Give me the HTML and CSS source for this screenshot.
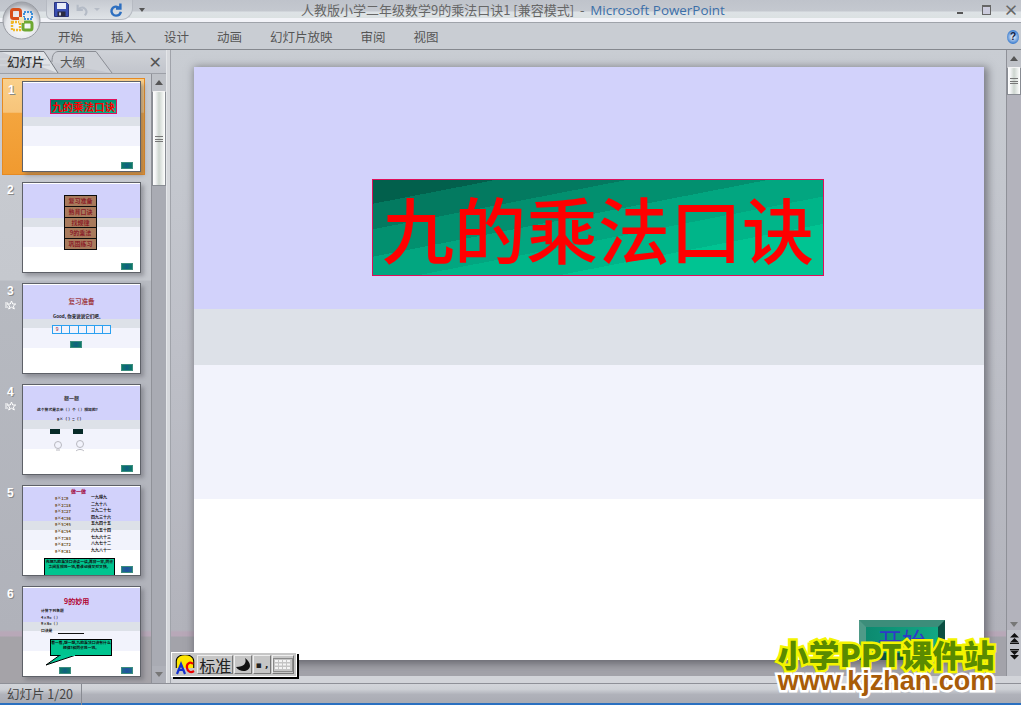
FILE: index.html
```html
<!DOCTYPE html>
<html lang="zh">
<head>
<meta charset="utf-8">
<title>PowerPoint</title>
<link rel="stylesheet" href="styles.css">
</head>
<body>
<div class="app">
  <header class="titlebar">
    <div class="qat">
      <svg class="qi" width="15" height="15" viewBox="0 0 15 15"><path d="M.5.5h12l2 2v12H.5z" fill="#3a4fb0" stroke="#2a3580"/><rect x="3" y="1" width="9" height="6" fill="#e8ecf8"/><rect x="3.500" y="9.500" width="8" height="5" fill="#2b2b40"/><rect x="5" y="10.500" width="2" height="3" fill="#c8c8d8"/></svg>
      <svg class="qi qi-undo" width="14" height="14" viewBox="0 0 16 16"><path d="M3 2v6h6M3.500 8C6 4 11 4 13 9c.5 2-.5 4-2 5" fill="none" stroke="#b4bbc6" stroke-width="2.400"/></svg>
      <span class="qcaret"></span>
      <svg class="qi qi-redo" width="14" height="15" viewBox="0 0 16 16"><path d="M13 1v6H8M12.500 7C10 3.500 4.500 4 3 8.500 2 12 5 15 8 15s5-2 5.500-4.500" fill="none" stroke="#2d6fc0" stroke-width="2.800"/></svg>
    </div>
    <span class="qmore"></span>
    <h1 class="wintitle">人教版小学二年级数学9的乘法口诀1 [兼容模式] &nbsp;-&nbsp; <span class="appname">Microsoft PowerPoint</span></h1>
    <div class="winbtns">
      <span class="wb wb-min"></span>
      <span class="wb wb-max"></span>
      <span class="wb wb-x">×</span>
    </div>
  </header>

  <nav class="ribbon">
    <span class="rtab">开始</span>
    <span class="rtab">插入</span>
    <span class="rtab">设计</span>
    <span class="rtab">动画</span>
    <span class="rtab">幻灯片放映</span>
    <span class="rtab">审阅</span>
    <span class="rtab">视图</span>
    <span class="help">?</span>
  </nav>

  <main class="workspace">
    <aside class="panel">
      <div class="ptabs">
        <svg class="ptab-lines" width="120" height="23" viewBox="0 0 120 23"><path d="M0 .5H44L58 22" fill="#e0e3e7" stroke="#777b82"/><path d="M52 11C52 4 54 1 58 .5H96L112 22" fill="#cdd0d6" stroke="#8a8d94"/><path d="M0 8H46M0 14H50" stroke="#d0d3d8" stroke-width="2"/></svg>
        <span class="ptab ptab-on">幻灯片</span>
        <span class="ptab">大纲</span>
        <span class="pclose">✕</span>
      </div>
      <div class="pbody">
        <div class="slides">
          <div class="srow srow-on">
            <div class="snum">1</div>
            <div class="thumb"><div class="t1-banner">九的乘法口诀</div><span class="t-btn t-btn-end"></span></div>
          </div>
          <div class="srow">
            <div class="snum">2</div>
            <div class="thumb">
              <div class="t2-menu">
                <span>复习准备</span><span>熟背口诀</span><span>找规律</span><span>9的乘法</span><span>巩固练习</span>
              </div>
              <span class="t-btn t-btn-end"></span>
            </div>
          </div>
          <div class="srow">
            <div class="snum">3<svg class="star" width="11" height="10" viewBox="0 0 11 10"><path d="M6.500 1l1.200 3h3l-2.400 2 1 3-2.800-1.800L3.700 9l1-3-2.400-2h3z M0 3h3M0 5h2M0 7h3" fill="none" stroke="#fff"/></svg></div>
            <div class="thumb">
              <div class="t3-title">复习准备</div>
              <div class="t3-line">Good, 你来说说它们吧。</div>
              <div class="t3-grid"><i>9</i><i></i><i></i><i></i><i></i><i></i><i></i></div>
              <span class="t-btn t3-btn"></span>
              <span class="t-btn t-btn-end"></span>
            </div>
          </div>
          <div class="srow">
            <div class="snum">4<svg class="star" width="11" height="10" viewBox="0 0 11 10"><path d="M6.500 1l1.200 3h3l-2.400 2 1 3-2.800-1.800L3.700 9l1-3-2.400-2h3z M0 3h3M0 5h2M0 7h3" fill="none" stroke="#fff"/></svg></div>
            <div class="thumb">
              <div class="t4-title">想一想</div>
              <div class="t4-line1">这个算式是表示（ ）个（ ）相加的？</div>
              <div class="t4-line2">9×（ ）=（ ）</div>
              <span class="t4-key t4-key-a"></span><span class="t4-key t4-key-b"></span>
              <svg class="t4-ico" width="40" height="14" viewBox="0 0 40 14"><circle cx="6" cy="6" r="3.500" fill="none" stroke="#b8b8c0"/><path d="M4 11h4" stroke="#b8b8c0"/><circle cx="28" cy="5" r="3.500" fill="none" stroke="#b8b8c0"/><path d="M24 12c2-2 6-2 8 0" fill="none" stroke="#b8b8c0"/></svg>
              <span class="t-btn t-btn-end"></span>
            </div>
          </div>
          <div class="srow">
            <div class="snum">5</div>
            <div class="thumb">
              <div class="t5-title">做一做</div>
              <div class="t5-col t5-col-a"><span>9×1=9</span><span>9×2=18</span><span>9×3=27</span><span>9×4=36</span><span>9×5=45</span><span>9×6=54</span><span>9×7=63</span><span>9×8=72</span><span>9×9=81</span></div>
              <div class="t5-col t5-col-b"><span>一九得九</span><span>二九十八</span><span>三九二十七</span><span>四九三十六</span><span>五九四十五</span><span>六九五十四</span><span>七九六十三</span><span>八九七十二</span><span>九九八十一</span></div>
              <div class="t5-note">先把九的乘法口诀读一读,再背一背,同桌之间互相说一说,看谁记得又对又快。</div>
              <span class="t-btn t-btn-end t-btn-blue"></span>
            </div>
          </div>
          <div class="srow">
            <div class="snum">6</div>
            <div class="thumb">
              <div class="t6-title">9的妙用</div>
              <div class="t6-lines"><span>计算下列各题</span><span>4×9=（ ）</span><span>9×6=（ ）</span><span>口诀是</span></div>
              <span class="t6-rule"></span>
              <div class="t6-note">看一看,想一想,九的乘法口诀有什么规律?和同桌说一说。</div>
              <svg class="t6-tail" width="30" height="11" viewBox="0 0 30 11"><path d="M14 0H30L0 10z" fill="#00c896" stroke="#000"/><path d="M15 0h14" stroke="#00c896" stroke-width="2"/></svg>
              <span class="t-btn t6-btn"></span>
              <span class="t-btn t-btn-end t-btn-blue"></span>
            </div>
          </div>
        </div>
        <div class="vscroll">
          <span class="sarrow sarrow-up"></span>
          <span class="sthumb sthumb-left"><i></i></span>
          <span class="strack"></span>
          <span class="sarrow sarrow-down"></span>
        </div>
      </div>
    </aside>
    <div class="splitter"></div>
    <div class="mainarea">
      <div class="mainrow">
        <section class="stage">
          <article class="slide">
            <div class="banner">九的乘法口诀</div>
            <button class="startbtn">开始</button>
          </article>
        </section>
        <div class="vscroll vscroll-main">
          <span class="sarrow sarrow-up"></span>
          <span class="sthumb sthumb-main"><i></i></span>
          <span class="strack"></span>
          <span class="sarrow sarrow-down"></span>
          <span class="pagebtns">
            <svg width="9" height="11" viewBox="0 0 9 11"><path d="M4.500 0L9 4.500H0zM4.500 5L9 9.500H0z" fill="#111"/><path d="M0 10.500h9" stroke="#111"/></svg>
            <svg width="9" height="11" viewBox="0 0 9 11"><path d="M0 .5h9" stroke="#111"/><path d="M0 1.500h9L4.500 6zM0 6h9l-4.500 4.500z" fill="#111"/></svg>
          </span>
        </div>
      </div>
      <div class="hstrip"></div>
    </div>
  </main>

  <footer class="status"><span class="scell">幻灯片 1/20</span></footer>

  <svg class="office" width="40" height="40" viewBox="0 0 40 40">
    <defs><radialGradient id="orb" cx="50%" cy="65%" r="60%"><stop offset="0" stop-color="#fff"/><stop offset=".7" stop-color="#e4e6ea"/><stop offset="1" stop-color="#a6a9b0"/></radialGradient></defs>
    <circle cx="20.500" cy="19.500" r="18.500" fill="url(#orb)" stroke="#9a9da4"/>
    <rect x="10.500" y="8.500" width="9" height="9" rx="2" fill="none" stroke="#d8501c" stroke-width="3"/>
    <rect x="23" y="11" width="8" height="7" fill="none" stroke="#3f8fd8" stroke-width="2" stroke-dasharray="2 1"/>
    <rect x="11" y="21" width="8" height="8" fill="none" stroke="#f0b828" stroke-width="2.400" stroke-dasharray="2 1"/>
    <rect x="22" y="21" width="9" height="8" rx="2" fill="none" stroke="#6ea832" stroke-width="3"/>
    <rect x="18" y="16" width="5" height="6" fill="#f8e4b0"/>
  </svg>

  <div class="ime">
    <svg class="ime-a" width="20" height="20" viewBox="0 0 20 20"><path d="M3 13V6c0-6 14-6 14 0v7" fill="none" stroke="#000" stroke-width="4.500"/><path d="M3 13V6c0-6 14-6 14 0v7" fill="#ffe600" stroke="#ffe600" stroke-width="2.400"/><path d="M2 19l4-10 4 10M3.500 15h5" fill="none" stroke="#1230d0" stroke-width="2.200"/><path d="M18 9c-3-3-7 0-6 4 .5 4 4 5 7 3" fill="none" stroke="#e00" stroke-width="2.200"/></svg>
    <span class="ime-cell ime-txt">标准</span>
    <span class="ime-cell ime-moon"><svg width="16" height="16" viewBox="0 0 16 16"><path d="M10 1c2 5-1 9-9 9 3 5 13 6 14-1 0-3-2-6-5-8z" fill="#111"/></svg></span>
    <span class="ime-cell ime-punc">▪ ,</span>
    <span class="ime-cell ime-kb"><svg width="20" height="14" viewBox="0 0 20 14"><rect x=".5" y=".5" width="19" height="13" fill="#c4c4c4" stroke="#8a8a8a"/><path d="M2 3h16M2 6.500h16M2 10h16" stroke="#f4f4f4" stroke-width="2" stroke-dasharray="3 1"/></svg></span>
  </div>

  <div class="watermark">
    <div class="wm-cn">小学PPT课件站</div>
    <div class="wm-url">www.kjzhan.com</div>
  </div>
</div>
</body>
</html>
```

FILE: styles.css
```css
* { box-sizing: border-box; }
html, body { margin: 0; padding: 0; }
body { font-family: "Noto Sans CJK SC", "Liberation Sans", sans-serif; overflow: hidden; }

.app { position: relative; width: 1021px; height: 705px; display: flex; flex-direction: column; overflow: hidden; background: #c9cdd3; }

/* title bar */
.titlebar { height: 23px; flex: none; display: flex; align-items: center; padding-left: 52px; position: relative;
  background: linear-gradient(#bfc3cb 0, #c4c8cf 11px, #dde2e6 12px, #dbe1e2 18px, #f2f3f8 18px, #f2f3f8 22px, #9fa3aa 22px); }
.office { position: absolute; left: 1px; top: 1px; }
.qat { height: 20px; margin-top: -3px; width: 87px; display: flex; align-items: center; margin-left: -6px; padding-left: 7px;
  background: linear-gradient(#c6cad1, #dfe3e7); border: 1px solid #b6bac2; border-top: 0; border-radius: 0 0 12px 6px; flex: none; }
.qi { flex: none; }
.qi-undo { margin-left: 6px; }
.qi-redo { margin-left: 9px; }
.qcaret { width: 0; height: 0; border: 3px solid transparent; border-top: 3px solid #b6bcc6; margin: 3px 0 0 5px; }
.qmore { width: 0; height: 0; border: 3px solid transparent; border-top: 4px solid #555; margin: -1px 0 0 6px; flex: none; }
.wintitle { margin: 0; position: absolute; left: 301px; top: -2px; font-size: 13px; font-weight: 400; color: #666; white-space: nowrap; line-height: 23px; }
.appname { color: #3c6fa8; font-family: "Open Sans", "Liberation Sans", sans-serif; font-size: 13.400px; }
.winbtns { margin-left: auto; display: flex; height: 18px; margin-top: -4px; align-items: center; }
.wb { width: 26px; height: 18px; display: flex; justify-content: center; align-items: center; color: #666; }
.wb-min::before { content: ""; width: 6px; height: 2px; background: #555; margin-top: 6px; }
.wb-max::before { content: ""; width: 7px; height: 7px; border: 1px solid #666; border-top-width: 2px; background: #ccd; }
.wb-x { width: 20px; margin-left: 2px; font-size: 15px; font-weight: 700; line-height: 18px; }

/* ribbon */
.ribbon { height: 27px; flex: none; display: flex; align-items: center; padding-left: 58px; background: #c9cdd3; border-bottom: 1px solid #85888e; position: relative; font-size: 12.500px; color: #555; }
.rtab { margin-right: 28px; line-height: 27px; }
.help { position: absolute; right: 2px; top: 7px; width: 12px; height: 14px; border-radius: 50%; background: radial-gradient(circle, #fff 0, #3e7fd0 70%); color: #124; font: 700 10px/14px "Liberation Sans", sans-serif; text-align: center; }

/* workspace */
.workspace { flex: 1; min-height: 0; display: flex; background: linear-gradient(#c9cdd3 0, #bec0c8 300px, #b2b3bb 580px, #b8a8b8 582px, #b8a8b8 586px, #a3a3aa 587px); }
.panel { width: 166px; flex: none; display: flex; flex-direction: column; }
.ptabs { height: 23px; flex: none; display: flex; align-items: flex-end; position: relative; font-size: 12.500px; color: #555; border-bottom: 1px solid #9da0a7; margin-top: 1px;
  background: linear-gradient(#cfd2d8, #c2c5cc); }
.ptab-lines { position: absolute; left: 0; top: 0; }
.ptab { position: relative; height: 21px; line-height: 20px; }
.ptab-on { color: #333; font-weight: 500; width: 60px; padding-left: 7px; }
.pclose { position: absolute; right: 4px; top: 1px; font: 700 16px/21px "DejaVu Sans", sans-serif; color: #555; }
.pbody { flex: 1; min-height: 0; display: flex; }
.slides { width: 151px; flex: none; overflow: hidden; padding: 4px 0 0 2px; display: flex; flex-direction: column; gap: 4px;
  background: linear-gradient(#c9ccd2 0, #c5c8ce 206px, #b7bac1 207px, #b0b2ba 556px, #b8a8b8 558px, #b8a8b8 562px, #a5a3a8 563px); }
.srow { width: 143px; height: 97px; flex: none; padding: 3px 0 0 20px; display: flex; position: relative; }
.srow-on { background: linear-gradient(#fad08a 0, #f7c47a 35%, #f4a53e 36%, #f09a30 100%); border: 1px solid #e68a22; padding: 2px 0 0 19px; }
.snum { position: absolute; left: 5px; top: 4px; width: 12px; color: #fff; font: 700 12px/14px "Liberation Sans", sans-serif; text-shadow: 1px 1px 0 #888; }
.star { display: block; margin-left: -2px; margin-top: 2px; }
.thumb { width: 119px; height: 91px; flex: none; position: relative; overflow: hidden; border: 1px solid #5e6168; box-shadow: 3px 3px 4px rgba(90,90,100,.45);
  background: linear-gradient(#fff 0, #fff 1px, #d2d2fb 1px, #d2d2fb 35px, #dde1e8 35px, #dde1e8 44px, #f2f3fc 44px, #f2f3fc 64px, #fff 64px); }

.t1-banner { position: absolute; left: 27px; top: 17px; width: 67px; height: 15px; border: 1px solid #e0105a; background: linear-gradient(169deg, #02705a, #00b589); color: #f00; font-size: 10.500px; font-weight: 700; line-height: 13px; text-align: center; white-space: nowrap; }
.t-btn { position: absolute; width: 12px; height: 7px; background: linear-gradient(90deg, #0c7a68, #0f5f80, #0c7a68); border: 1px solid #3b8d7e; }
.t-btn-end { right: 7px; bottom: 2px; }
.t-btn-blue { background: linear-gradient(90deg, #1c6a8c, #2050a0, #1c6a8c); }
.t2-menu { position: absolute; left: 41px; top: 12px; width: 33px; height: 55px; background: #0c0c0c; display: flex; flex-direction: column; gap: 1px; padding: 1px 0; }
.t2-menu span { flex: 1; margin: 0 1px; background: #a87a5c; color: #8a1f28; font-size: 6px; font-weight: 700; line-height: 10px; text-align: center; white-space: nowrap; overflow: hidden; }
.t3-title { position: absolute; left: 0; right: 0; top: 13px; text-align: center; font-size: 6.500px; font-weight: 700; color: #a04048; line-height: 9px; }
.t3-line { position: absolute; left: 30px; top: 29px; font-size: 4.500px; line-height: 6px; color: #222; white-space: nowrap; font-weight: 700; }
.t3-grid { position: absolute; left: 29px; top: 41px; display: flex; border: 1px solid #2ba0f0; background: #f2f3fc; }
.t3-grid i { width: 8.200px; height: 7px; border-left: 1px solid #2ba0f0; font: normal 5px/7px "Liberation Sans", sans-serif; color: #a02030; text-align: center; }
.t3-grid i:first-child { border-left: 0; }
.t3-btn { left: 47px; top: 57px; }
.t4-title { position: absolute; left: 41px; top: 9px; font-size: 5px; line-height: 7px; color: #333; font-weight: 700; }
.t4-line1 { position: absolute; left: 14px; top: 22px; font-size: 3.800px; line-height: 6px; color: #222; white-space: nowrap; font-weight: 700; }
.t4-line2 { position: absolute; left: 34px; top: 31px; font-size: 4px; line-height: 6px; color: #222; white-space: nowrap; font-weight: 700; }
.t4-key { position: absolute; width: 10px; height: 5px; top: 44px; background: #072a28; }
.t4-key-a { left: 27px; } .t4-key-b { left: 50px; }
.t4-ico { position: absolute; left: 29px; top: 54px; }
.t5-title { position: absolute; left: 48px; top: 2px; font-size: 5px; line-height: 6px; font-weight: 700; color: #a00038; }
.t5-col { position: absolute; top: 9px; display: flex; flex-direction: column; font-size: 4px; line-height: 6.600px; font-weight: 700; white-space: nowrap; }
.t5-col-a { left: 32px; color: #6a4a20; }
.t5-col-b { left: 68px; top: 8px; color: #111; }
.t5-note { position: absolute; left: 21px; bottom: 0; width: 71px; height: 17px; background: #00c48f; border: 1px solid #000; border-bottom: 0; font-size: 3.800px; font-weight: 700; line-height: 5px; color: #111; text-align: center; overflow: hidden; }
.t6-title { position: absolute; left: 41px; top: 9px; font-size: 7px; line-height: 10px; font-weight: 700; color: #b00030; white-space: nowrap; }
.t6-lines { position: absolute; left: 18px; top: 21px; display: flex; flex-direction: column; font-size: 3.800px; line-height: 6.500px; color: #222; font-weight: 700; white-space: nowrap; }
.t6-rule { position: absolute; left: 35px; top: 46px; width: 26px; height: 1px; background: #111; }
.t6-note { position: absolute; left: 27px; top: 52px; width: 62px; height: 17px; background: #00c48f; border: 1px solid #000; font-size: 3.800px; font-weight: 700; line-height: 5px; text-align: center; color: #111; overflow: hidden; }
.t6-tail { position: absolute; left: 23px; top: 68px; }
.t6-btn { left: 36px; bottom: 2px; }

/* scrollbars */
.vscroll { width: 15px; flex: none; display: flex; flex-direction: column; background: #a9abb3; border-left: 1px solid #8f9198; }
.sarrow { height: 17px; flex: none; display: flex; align-items: center; justify-content: center; background: #bfc2c8; }
.sarrow-up::before { content: ""; border: 4px solid transparent; border-top: 0; border-bottom: 5px solid #555; }
.sarrow-down::before { content: ""; border: 4px solid transparent; border-bottom: 0; border-top: 5px solid #777; }
.sarrow-down { background: #aeb0b8; }
.sthumb { height: 95px; flex: none; background: linear-gradient(90deg, #fff 0, #f3f4f5 20%, #cdd5cf 50%, #fff 100%); border: 1px solid #888c93; border-top-color: #f4f4f4; display: flex; align-items: center; justify-content: center; }
.sthumb i { width: 8px; height: 6px; border-top: 1px solid #777; border-bottom: 1px solid #777; position: relative; }
.sthumb i::after { content: ""; position: absolute; left: 0; right: 0; top: 2px; border-top: 1px solid #777; }
.sthumb-main { height: 28px; }
.strack { flex: 1; }
.vscroll-main { background: #b3b3bc; }
.vscroll-main .sarrow-down { height: 12px; background: #b3b3bc; }
.pagebtns { height: 46px; flex: none; display: flex; flex-direction: column; align-items: center; gap: 5px; padding-top: 3px; background: #c0c2c9; }
.splitter { width: 5px; flex: none; background: #d6d8dc; border-left: 1px solid #e4e6e9; border-right: 1px solid #a0a3aa; }

/* slide */
.mainarea { flex: 1; min-width: 0; display: flex; flex-direction: column; }
.mainrow { flex: 1; min-height: 0; display: flex; }
.hstrip { height: 7px; flex: none; background: #d2d4d9; }
.stage { flex: 1; min-width: 0; padding: 17px 23px 0; }
.slide { position: relative; width: 790px; height: 593px; box-shadow: 2px 2px 8px 2px rgba(60,60,70,.55);
  background: linear-gradient(#d2d2fb 0, #d2d2fb 242px, #dde1e8 242px, #dde1e8 298px, #f2f3fc 298px, #f2f3fc 432px, #fff 432px); }
.banner { position: absolute; left: 178px; top: 112px; width: 452px; height: 97px; border: 1px solid #e0105a; color: #f00; font-size: 72px; font-weight: 500; line-height: 93px; text-align: center; white-space: nowrap;
  background: linear-gradient(169deg, #02604c 0 13%, #037a60 13% 27%, #02906f 27% 42%, #02a680 42% 57%, #00b589 57% 72%, #00c492 72%); }
.startbtn { position: absolute; left: 665px; top: 553px; width: 86px; height: 40px; padding: 0; border: 7px solid; border-color: #3c8d7a #0b4f42 #0b4f42 #4f9a88; background: linear-gradient(90deg, #0c8a70, #12a884); color: #3038c8; font: 400 24px/26px "Noto Sans CJK SC", sans-serif; text-align: center; }

/* status */
.status { height: 22px; flex: none; display: flex; background: linear-gradient(#d3d5da 0, #cdd0d5 25%, #b0b2ba 50%, #a9abb3 90%, #2a70c0 92%); border-top: 1px solid #8e9097; font-size: 12.500px; color: #444; }
.scell { width: 82px; padding-left: 7px; line-height: 19px; border-right: 1px solid #888b92; }

/* overlays */
.ime { position: absolute; left: 171px; top: 652px; width: 126px; height: 25px; display: flex; gap: 1px; padding: 2px; background: #c6c6c6; border: 1px solid #fff; box-shadow: 2px 2px 0 #000; align-items: stretch; }
.ime-a { flex: none; margin: 0 1px; }
.ime-cell { background: #c6c6c6; border: 1px solid; border-color: #eee #777 #777 #eee; display: flex; align-items: center; justify-content: center; color: #222; }
.ime-txt { width: 39px; font-size: 16px; line-height: 20px; }
.ime-moon { width: 19px; }
.ime-punc { width: 19px; font: 700 9px/12px "DejaVu Sans", sans-serif; }
.ime-kb { width: 22px; }
.watermark { position: absolute; left: 770px; top: 636px; width: 232px; text-align: center; }
.wm-cn { font-size: 31px; line-height: 36px; font-weight: 900; color: #5a8a00; -webkit-text-stroke: 5px #f4f400; paint-order: stroke fill; white-space: nowrap; }
.wm-url { font-family: "Liberation Sans", sans-serif; font-size: 27px; line-height: 29px; font-weight: 700; color: #a85c08; -webkit-text-stroke: 5px #fff; paint-order: stroke fill; white-space: nowrap; margin-top: -5px; }
```
